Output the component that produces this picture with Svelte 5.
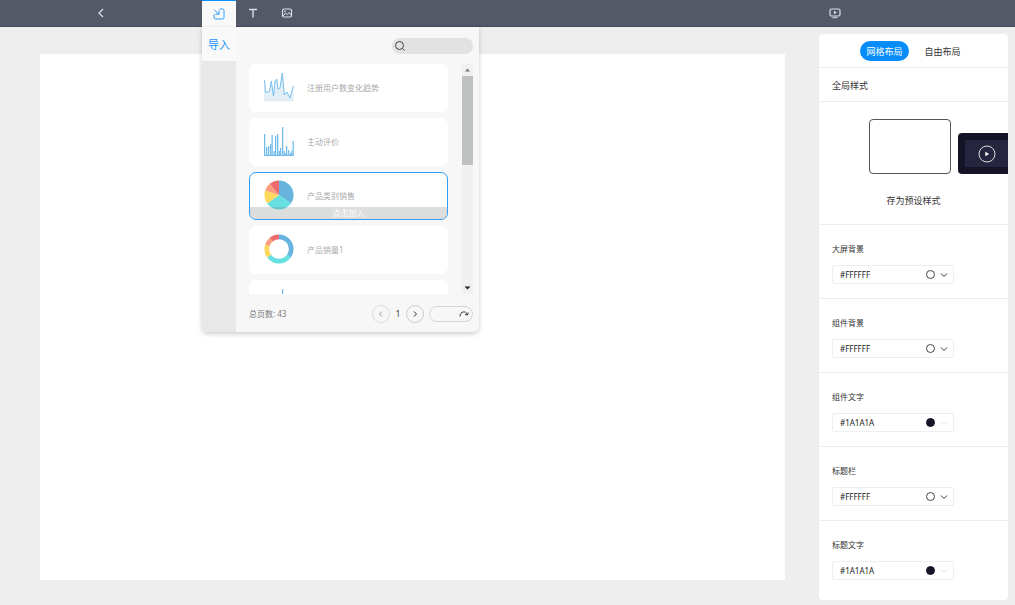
<script>
	var cards = [
		{ name: '注册用户数变化趋势', type: 'line' },
		{ name: '主动评价', type: 'bar' },
		{ name: '产品类别销售', type: 'pie' },
		{ name: '产品销量1', type: 'ring' },
		{ name: '', type: 'bar' }
	];

	// [x, height]
	var bars = [
		[0, 22], [2, 9], [4, 10], [6, 12], [7.5, 21], [9.5, 5], [11, 20], [13, 22], [14.7, 5],
		[16, 8], [18, 29], [19.5, 5], [21, 3], [22, 10], [24, 6], [26, 3], [27, 5], [28.5, 15]
	];

	var slices = [
		{ color: '#67b5de', from: 0, size: 35 },
		{ color: '#66dfe1', from: 35, size: 30 },
		{ color: '#fed85b', from: 65, size: 15 },
		{ color: '#fb9f80', from: 80, size: 9 },
		{ color: '#ee6a6c', from: 89, size: 11 }
	];

	var colors = $state([
		{ id: 'screen-bg', label: '大屏背景', value: '#FFFFFF' },
		{ id: 'widget-bg', label: '组件背景', value: '#FFFFFF' },
		{ id: 'widget-text', label: '组件文字', value: '#1A1A1A' },
		{ id: 'title-bar', label: '标题栏', value: '#FFFFFF' },
		{ id: 'title-text', label: '标题文字', value: '#1A1A1A' }
	]);

	var selected = $state(2);
	var layout = $state('grid');
	var search = $state('');
	var jump = $state('');
</script>

{#snippet chart(type)}
	<svg class="chart" viewBox="0 0 30 30" aria-hidden="true">
		{#if type === 'line'}
			<path d="M0 8L1.500 20H4L5.500 19L7.300 9L9.500 24L11 10L12.700 7L14 17L16 16L18.300 1L20.300 23L23 20L26 26L29.500 14V29.500H0Z" fill="#e3eef7" />
			<path d="M.5 8L1.500 20H4L5.500 19L7.300 9L9.500 24L11 10L12.700 7L14 17L16 16L18.300 1L20.300 23L23 20L26 26L29.500 14" fill="none" stroke="#75bdec" />
		{:else if type === 'bar'}
			<path d="M0 29.500h30" stroke="#62b2e4" />
			{#each bars as [x, h]}
				<rect {x} y={30 - h} width="1.300" height={h} fill="#74bcec" />
			{/each}
		{:else}
			<g transform="rotate(-90 15 15)" fill="none" stroke-width={type === 'pie' ? 14.6 : 4.7}>
				{#each slices as s}
					<circle
						cx="15"
						cy="15"
						r={type === 'pie' ? 7.3 : 12.2}
						pathLength="100"
						stroke={s.color}
						stroke-dasharray="{s.size} {100 - s.size}"
						stroke-dashoffset={-s.from}
					/>
				{/each}
			</g>
		{/if}
	</svg>
{/snippet}

<div class="page">
	<header>
		<div class="back">
			<button class="icon-btn" aria-label="返回">
				<svg width="14" height="14" viewBox="0 0 14 14"><path d="M9 3L5 7l4 4" stroke-width="1.300" /></svg>
			</button>
		</div>
		<nav>
			<button class="icon-btn active" aria-label="导入">
				<svg width="14" height="14" viewBox="0 0 14 14">
					<path d="M7.500 2h3q1.500 0 1.500 1.500v7q0 1.500-1.500 1.500h-7Q2 12 2 10.500V7.500M2 2.500l4.500 4.500M7 3.500v3.700H3.300" />
				</svg>
			</button>
			<button class="icon-btn" aria-label="文本">
				<svg width="14" height="14" viewBox="0 0 14 14"><path d="M3 3.500h8M7 3.500v8" stroke-width="1.400" /></svg>
			</button>
			<button class="icon-btn" aria-label="图片">
				<svg width="14" height="14" viewBox="0 0 14 14">
					<rect x="2.500" y="3" width="9" height="8" rx="1.500" stroke-width="1.200" />
					<path d="M3 10l2.500-3 2 1.500L9 6.500l2.200 2.500" />
					<circle cx="5" cy="5.300" r=".5" />
				</svg>
			</button>

			<section class="panel">
				<aside>
					<button class="import-tab">导入</button>
				</aside>
				<div class="panel-body">
					<div class="search">
						<svg width="12" height="12" viewBox="0 0 12 12" aria-hidden="true">
							<circle cx="5.500" cy="5.500" r="4" />
							<path d="M8.500 8.500l2 2" />
						</svg>
						<input type="search" aria-label="搜索" bind:value={search} />
					</div>
					<div class="list">
						<div class="cards">
							{#each cards as card, i}
								<button class="card" class:selected={selected === i} aria-label={card.name || '图表'} onclick={() => (selected = i)}>
									{@render chart(card.type)}
									<span>{card.name}</span>
									{#if selected === i}
										<span class="add">点击加入</span>
									{/if}
								</button>
							{/each}
						</div>
						<div class="scrollbar">
							<button aria-label="向上滚动">
								<svg width="7" height="4" viewBox="0 0 7 4"><path d="M3.500.5L6 3.500H1z" fill="#777" /></svg>
							</button>
							<div class="thumb"></div>
							<button class="down" aria-label="向下滚动">
								<svg width="7" height="4" viewBox="0 0 7 4"><path d="M.5.5h6l-3 3z" fill="#222" /></svg>
							</button>
						</div>
					</div>
					<footer>
						<span class="total">总页数: 43</span>
						<button class="round" disabled aria-label="上一页">
							<svg width="8" height="8" viewBox="0 0 8 8"><path d="M5 1.500L2.500 4 5 6.500" /></svg>
						</button>
						<span class="current">1</span>
						<button class="round" aria-label="下一页">
							<svg width="8" height="8" viewBox="0 0 8 8"><path d="M3 1.500L5.500 4 3 6.500" /></svg>
						</button>
						<div class="jump">
							<input type="text" aria-label="跳转页码" bind:value={jump} />
							<button aria-label="跳转">
								<svg width="10" height="8" viewBox="0 0 10 8">
									<path d="M1 6.500C1 1 7 .5 8.300 4.500M9.300 2.500L8.500 5 6 4.500" />
								</svg>
							</button>
						</div>
					</footer>
				</div>
			</section>
		</nav>
		<button class="icon-btn preview" aria-label="预览">
			<svg width="14" height="14" viewBox="0 0 14 14">
				<rect x="2" y="3" width="10" height="7" rx="1.500" stroke-width="1.200" />
				<path d="M4.500 11.700h5" />
				<path d="M6 4.800v3.400L8.800 6.500z" fill="currentColor" stroke="none" />
			</svg>
		</button>
	</header>

	<main>
		<div class="canvas"></div>
		<div class="settings">
			<div class="tabs">
				<button class:on={layout === 'grid'} onclick={() => (layout = 'grid')}>网格布局</button>
				<button class:on={layout === 'free'} onclick={() => (layout = 'free')}>自由布局</button>
			</div>
			<h2>全局样式</h2>
			<div class="presets">
				<div class="preset-row">
					<button class="preset light" aria-label="浅色样式"></button>
					<button class="preset dark" aria-label="深色样式">
						<span class="dark-inner">
							<svg width="18" height="18" viewBox="0 0 18 18">
								<circle cx="9" cy="9" r="8" stroke="#ddd" />
								<path d="M7.300 6.700v4.600l3.900-2.300z" fill="#fff" stroke="none" />
							</svg>
						</span>
					</button>
				</div>
				<button class="save">存为预设样式</button>
			</div>
			{#each colors as c}
				<div class="color-row">
					<label for={c.id}>{c.label}</label>
					<div class="field">
						<input id={c.id} type="text" bind:value={c.value} />
						<button class:faded={c.value === '#1A1A1A'} aria-label="选择颜色">
							<span class="swatch" class:dark-swatch={c.value === '#1A1A1A'}></span>
							<svg width="8" height="6" viewBox="0 0 8 6"><path d="M1 1.500l3 3 3-3" /></svg>
						</button>
					</div>
				</div>
			{/each}
		</div>
	</main>
</div>

<style>
	:global(body) {
		margin: 0;
	}

	.page {
		display: flex;
		flex-direction: column;
		min-height: 100vh;
		background: #eee;
		color: #333;
		font-family: 'Noto Sans', 'Noto Sans CJK SC', sans-serif;
		font-size: 8px;
		line-height: 12px;
	}

	.page * {
		box-sizing: border-box;
	}

	button,
	input {
		margin: 0;
		padding: 0;
		border: 0;
		background: none;
		color: inherit;
		font: inherit;
		outline: none;
	}

	button {
		cursor: pointer;
	}

	svg {
		display: block;
		flex: none;
		fill: none;
		stroke: currentColor;
	}

	header {
		display: flex;
		height: 27px;
		background: #535967;
		border-bottom: 1px solid #474c5a;
		color: #dcdfe5;
	}

	.back {
		display: flex;
		justify-content: center;
		width: 202px;
	}

	.icon-btn {
		display: flex;
		align-items: center;
		justify-content: center;
		width: 34px;
		height: 26px;
	}

	.icon-btn.active {
		height: 27px;
		padding-bottom: 1px;
		border-top: 1px solid #0a90fb;
		background: #f9f9f9;
		color: #2a9df8;
	}

	.preview {
		margin-left: auto;
		margin-right: 163px;
	}

	nav {
		position: relative;
		display: flex;
	}

	.panel {
		position: absolute;
		top: 27px;
		left: 0;
		z-index: 1;
		display: flex;
		width: 277px;
		border-radius: 0 0 6px 6px;
		background: #f7f7f7;
		box-shadow: 0 2px 5px rgba(0, 0, 0, 0.2);
		color: #777;
	}

	aside {
		width: 34px;
		border-radius: 0 0 0 6px;
		background: #e8e8e8;
	}

	.import-tab {
		width: 34px;
		height: 34px;
		padding-top: 2px;
		background: #f9f9f9;
		color: #1894f8;
		font-size: 11px;
	}

	.panel-body {
		flex: 1;
		padding: 11px 6px 9px 13px;
	}

	.search {
		display: flex;
		align-items: center;
		width: 81px;
		height: 16px;
		margin-left: auto;
		padding: 0 2px;
		border-radius: 8px;
		background: #e2e2e2;
		color: #444;
	}

	.search input {
		flex: 1;
		min-width: 0;
	}

	.list {
		display: flex;
		justify-content: space-between;
		height: 230px;
		margin-top: 10px;
	}

	.cards {
		display: flex;
		flex-direction: column;
		gap: 6px;
		width: 199px;
		overflow: hidden;
	}

	.card {
		position: relative;
		display: flex;
		flex: none;
		align-items: center;
		gap: 13px;
		height: 48px;
		padding: 0 14px;
		border: 1px solid #fff;
		border-radius: 7px;
		background: #fff;
		color: #aaa;
		text-align: left;
		overflow: hidden;
	}

	.card.selected {
		border-color: #2f9df4;
	}

	.chart {
		width: 30px;
		height: 30px;
		margin-bottom: 3px;
		stroke: none;
	}

	.add {
		position: absolute;
		right: 0;
		bottom: 0;
		left: 0;
		background: rgba(130, 138, 138, 0.28);
		color: #fff;
		text-align: center;
	}

	.scrollbar {
		display: flex;
		flex-direction: column;
		width: 11px;
		background: #f0f0f0;
	}

	.scrollbar button {
		display: flex;
		align-items: center;
		justify-content: center;
		height: 12px;
	}

	.scrollbar svg {
		stroke: none;
	}

	.scrollbar .down {
		margin-top: auto;
	}

	.thumb {
		height: 89px;
		background: #bfc1c1;
	}

	footer {
		display: flex;
		align-items: center;
		height: 18px;
		margin-top: 11px;
	}

	.total {
		margin-right: auto;
	}

	.round {
		display: flex;
		align-items: center;
		justify-content: center;
		width: 18px;
		height: 18px;
		border: 1px solid #ccc;
		border-radius: 50%;
		color: #333;
	}

	.round:disabled {
		border-color: #ddd;
		color: #999;
	}

	.current {
		width: 16px;
		color: #333;
		text-align: center;
	}

	.jump {
		display: flex;
		align-items: center;
		width: 44px;
		height: 16px;
		margin-left: 5px;
		padding: 0 3px;
		border: 1px solid #d5d5d5;
		border-radius: 8px;
		color: #333;
	}

	.jump input {
		flex: 1;
		min-width: 0;
	}

	main {
		display: flex;
		flex: 1;
		gap: 34px;
		padding: 7px 7px 6px 40px;
	}

	.canvas {
		flex: 1;
		margin: 20px 0;
		background: #fff;
	}

	.settings {
		width: 189px;
		border-radius: 4px;
		background: #fff;
		overflow: hidden;
	}

	.tabs {
		display: flex;
		align-items: center;
		justify-content: center;
		gap: 9px;
		height: 34px;
		border-bottom: 1px solid #eee;
		font-size: 9px;
	}

	.tabs button {
		width: 49px;
		height: 20px;
		padding-top: 2px;
		border-radius: 10px;
	}

	.tabs .on {
		background: #068dfa;
		color: #fff;
	}

	h2 {
		height: 34px;
		margin: 0;
		padding: 0 13px;
		border-bottom: 1px solid #eee;
		font-size: 9px;
		font-weight: normal;
		line-height: 36px;
	}

	.presets {
		height: 123px;
		padding-top: 17px;
		border-bottom: 1px solid #eee;
	}

	.preset-row {
		display: flex;
		align-items: flex-end;
		gap: 7px;
		padding-left: 50px;
		overflow: hidden;
	}

	.preset {
		flex: none;
		border-radius: 4px;
	}

	.light {
		width: 82px;
		height: 55px;
		border: 1px solid #555;
	}

	.dark {
		width: 58px;
		height: 41px;
		padding: 7px;
		background: #151426;
	}

	.dark-inner {
		display: flex;
		align-items: center;
		justify-content: center;
		height: 27px;
		background: #25253f;
	}

	.save {
		display: block;
		margin: 21px auto 0;
		font-size: 9px;
	}

	.color-row {
		height: 74px;
		padding: 18px 13px 0;
		border-bottom: 1px solid #eee;
	}

	.color-row:last-child {
		height: 79px;
		border-bottom: 0;
	}

	label {
		display: block;
	}

	.field {
		display: flex;
		width: 122px;
		height: 19px;
		margin-top: 10px;
		padding: 0 5px 0 7px;
		border: 1px solid #eee;
		border-radius: 2px;
	}

	.field input {
		flex: 1;
		min-width: 0;
		color: #222;
	}

	.field button {
		display: flex;
		align-items: center;
		gap: 5px;
	}

	.swatch {
		width: 9px;
		height: 9px;
		border: 1px solid #444;
		border-radius: 50%;
	}

	.dark-swatch {
		border-color: #151527;
		background: #151527;
	}

	.faded svg {
		stroke: #ddd;
	}
</style>
